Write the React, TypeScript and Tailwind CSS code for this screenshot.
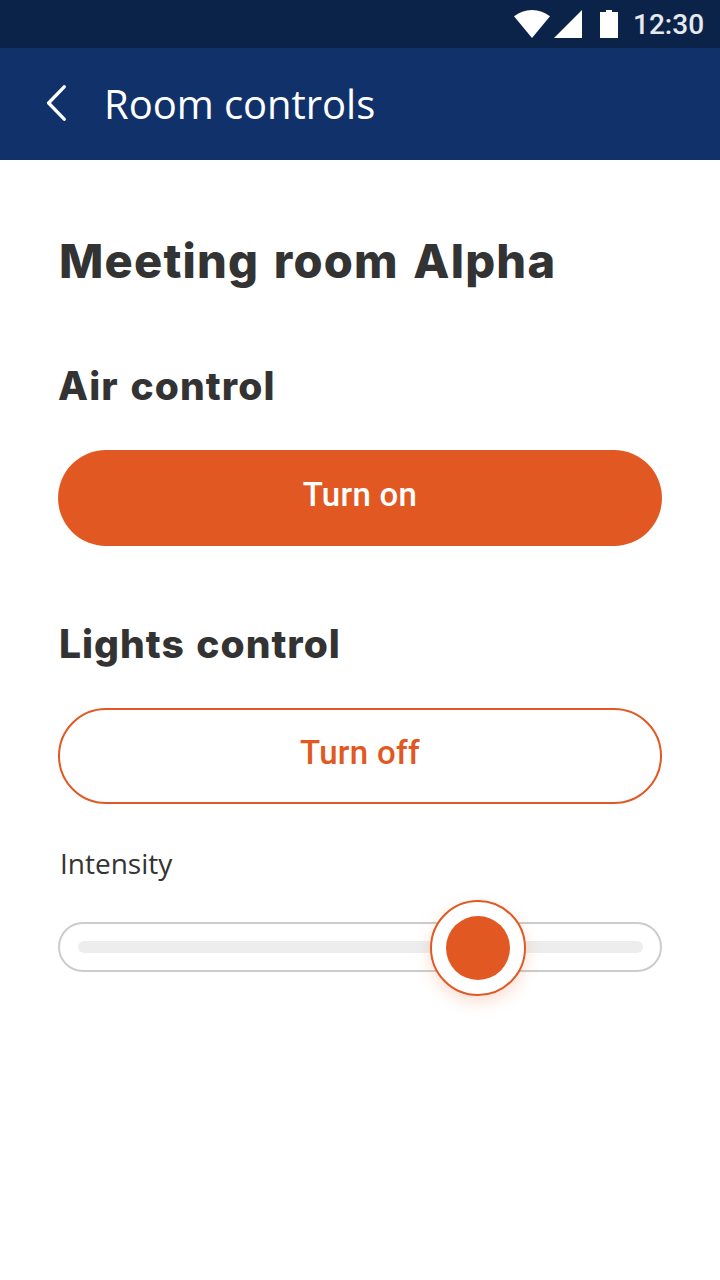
import { useState } from "react";

function StatusBar() {
  return (
    <div className="flex h-12 items-center bg-[#0b2249] pl-[514px] pr-4">
      <svg className="h-7 w-9 shrink-0" viewBox="0 0 36 28" fill="#fff">
        <path d="M0 6.3C5 2.3 11 0 18 0s13 2.3 18 6.3L18 28z" />
      </svg>
      <svg className="ml-1 h-7 w-7 shrink-0" viewBox="0 0 28 28" fill="#fff">
        <path d="M28 0v28H0z" />
      </svg>
      <svg className="ml-[18px] h-7 w-[18px] shrink-0" viewBox="0 0 18 28" fill="#fff">
        <path d="M6 0h6v2h6v26H0V2h6z" />
      </svg>
      <span className="ml-[15px] pt-0.5 whitespace-nowrap font-['Roboto',sans-serif] text-[28px] leading-[48px] font-medium text-white/90">
        12:30
      </span>
    </div>
  );
}

function Header() {
  return (
    <header className="flex h-28 items-center bg-[#11316b] pl-[46px]">
      <button aria-label="Back" className="mb-0.5 flex h-9 w-5 shrink-0">
        <svg className="h-9 w-5" viewBox="0 0 20 36" fill="none" stroke="#fff" strokeWidth="3.3" strokeLinecap="round" strokeLinejoin="round">
          <path d="M18.2 1.8 2.6 18l15.6 16.2" />
        </svg>
      </button>
      <span className="ml-[38px] font-['Open_Sans',sans-serif] text-[40px] leading-[56px] tracking-[-0.05px] whitespace-nowrap text-white">
        Room controls
      </span>
    </header>
  );
}

function Slider({ value }: { value: number }) {
  return (
    <div className="relative mt-[39px] flex h-[50px] items-center rounded-[25px] border-2 border-[#ccc] px-[17.5px]">
      <div className="h-3 w-full rounded-full bg-[#ededed]" />
      <div
        className="absolute -top-6 flex size-24 items-center justify-center rounded-full border-2 border-[#e25822] bg-white shadow-[0_6px_16px_rgba(226,88,34,0.2)]"
        style={{ left: value }}
      >
        <div className="size-16 shrink-0 rounded-full bg-[#e25822]" />
      </div>
    </div>
  );
}

export default function App() {
  const [intensity] = useState(370);
  return (
    <div className="h-[1280px] w-[720px] overflow-hidden bg-white">
      <StatusBar />
      <Header />
      <main className="flex flex-col px-[58px] pt-[72px] text-[#333]">
        <h1 className="pl-px font-['Inter',sans-serif] text-[47px] leading-[58px] font-extrabold tracking-[1.2px] whitespace-nowrap [word-spacing:3px]">
          Meeting room Alpha
        </h1>
        <h2 className="mt-[72px] font-['Inter',sans-serif] text-[39px] leading-[48px] font-extrabold tracking-[1.1px] whitespace-nowrap [word-spacing:2px]">
          Air control
        </h2>
        <button className="mt-10 flex h-24 justify-center rounded-[48px] bg-[#e25822] pt-[21px] font-['Roboto',sans-serif] text-[33px] leading-[48px] font-medium tracking-[0.3px] text-white">
          Turn on
        </button>
        <h2 className="mt-[74px] pl-px font-['Inter',sans-serif] text-[39px] leading-[48px] font-extrabold tracking-[1px] whitespace-nowrap [word-spacing:2px]">
          Lights control
        </h2>
        <button className="mt-10 flex h-24 justify-center rounded-[48px] border-2 border-[#e25822] pt-[19px] font-['Roboto',sans-serif] text-[33px] leading-[48px] font-medium tracking-[0.3px] text-[#e25822]">
          Turn off
        </button>
        <span className="mt-[39px] pl-0.5 font-['Open_Sans',sans-serif] text-[28px] leading-10">Intensity</span>
        <Slider value={intensity} />
      </main>
    </div>
  );
}
